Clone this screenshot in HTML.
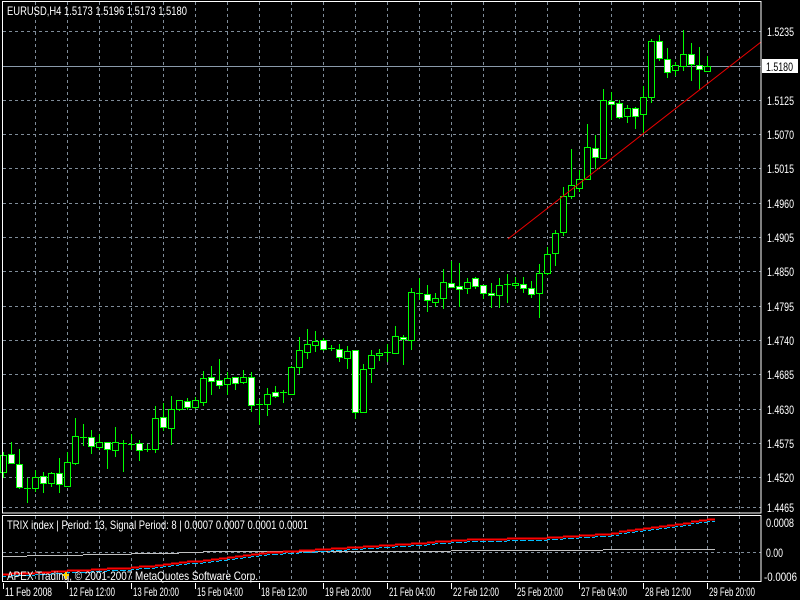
<!DOCTYPE html>
<html><head><meta charset="utf-8"><style>
html,body{margin:0;padding:0;background:#000;width:800px;height:600px;overflow:hidden}
svg{display:block}
text{font-family:"Liberation Sans",sans-serif;font-size:12px;fill:#fff}
</style></head><body>
<svg id="s" width="800" height="600" xmlns="http://www.w3.org/2000/svg">
<g id="grid" stroke="#7f8c99" stroke-width="1" stroke-dasharray="3,3" fill="none"></g>
<line x1="3" y1="66.5" x2="761" y2="66.5" stroke="#8a9aaa"/>
<g id="cand"></g>
<line x1="508" y1="239" x2="761" y2="42" stroke="#ee0000"/>
<g id="ind" fill="none"></g>
<g fill="none" stroke="#fff" stroke-width="1">
<rect x="2.5" y="1.5" width="758.5" height="511.5"/>
<rect x="2.5" y="515.5" width="758.5" height="66"/>
</g>
<text x="7" y="15" textLength="180" lengthAdjust="spacingAndGlyphs">EURUSD,H4  1.5173 1.5196 1.5173 1.5180</text>
<text x="7" y="529" textLength="301" lengthAdjust="spacingAndGlyphs">TRIX index | Period: 13, Signal Period: 8 |  0.0007 0.0007 0.0001 0.0001</text>
<text x="7" y="580" textLength="251" lengthAdjust="spacingAndGlyphs">APEX Trading, © 2001-2007 MetaQuotes Software Corp.</text>
<path d="M63 575 h6 M66 572 v7" stroke="#ffd700" stroke-width="2"/>
<g id="ax"></g>
<rect x="762" y="59" width="36" height="14" fill="#fff"/>
<text x="766" y="71" style="fill:#000" textLength="27" lengthAdjust="spacingAndGlyphs">1.5180</text>
<text x="766" y="527" textLength="28" lengthAdjust="spacingAndGlyphs">0.0008</text>
<text x="766" y="557" textLength="17" lengthAdjust="spacingAndGlyphs">0.00</text>
<text x="764" y="581" textLength="33" lengthAdjust="spacingAndGlyphs">-0.0006</text>
<g id="tx"></g>
</svg>
<script>
var NS="http://www.w3.org/2000/svg";
function el(p,t,a,txt){var e=document.createElementNS(NS,t);for(var k in a)e.setAttribute(k,a[k]);if(txt!==undefined)e.textContent=txt;document.getElementById(p).appendChild(e);return e;}
for(var x=35;x<761;x+=32){el('grid','line',{x1:x+.5,y1:2,x2:x+.5,y2:513});el('grid','line',{x1:x+.5,y1:516,x2:x+.5,y2:582});}
var labs=["1.5235","1.5180","1.5125","1.5070","1.5015","1.4960","1.4905","1.4850","1.4795","1.4740","1.4685","1.4630","1.4575","1.4520"];
for(var k=0;k<14;k++){var y=Math.round(31+34.33*k);if(k!=1){el('grid','line',{x1:3,y1:y+.5,x2:761,y2:y+.5});el('ax','text',{x:767,y:y+5,textLength:27,lengthAdjust:'spacingAndGlyphs'},labs[k]);}}
el('grid','line',{x1:3,y1:507.5,x2:761,y2:507.5});
el('ax','text',{x:767,y:512,textLength:27,lengthAdjust:'spacingAndGlyphs'},"1.4465");
el('grid','line',{x1:3,y1:552.5,x2:761,y2:552.5});
var C=[[3,452,477,455,472,0],[11,442,463,454,463,1],[19,449,488,464,487,1],[27,478,502,488,488,0],[35,470,491,477,488,0],[43,472,492,476,483,1],[51,472,486,473,483,0],[59,458,492,473,484,1],[67,452,486,462,486,0],[75,418,464,436,463,0],[83,424,445,437,437,0],[91,430,453,437,446,1],[99,434,449,442,447,0],[107,442,468,442,449,1],[115,427,456,442,450,0],[123,440,471,443,443,0],[131,434,449,444,444,0],[139,440,460,443,450,1],[147,444,451,449,449,0],[155,406,452,418,449,0],[163,403,430,417,427,1],[171,396,444,409,428,0],[179,400,410,400,409,0],[187,398,409,401,407,1],[195,397,408,400,407,0],[203,371,405,378,402,0],[211,366,394,377,381,1],[219,359,388,380,385,1],[227,372,394,378,384,0],[235,377,389,377,383,1],[243,370,383,377,382,0],[251,372,411,377,405,1],[259,399,424,404,404,0],[267,388,415,394,404,0],[275,386,397,392,396,1],[283,390,402,392,392,0],[291,366,394,367,394,0],[299,337,373,350,367,0],[307,329,358,344,352,0],[315,331,351,341,345,0],[323,338,350,340,349,1],[331,345,350,348,348,0],[339,344,361,349,357,1],[347,346,368,351,358,0],[355,350,418,350,412,1],[363,364,412,369,412,0],[371,350,382,355,368,0],[379,349,360,353,355,0],[387,344,361,352,352,0],[395,326,353,336,353,0],[403,335,364,337,339,1],[411,288,349,292,340,0],[419,278,299,293,293,0],[427,285,311,294,300,1],[435,293,306,298,302,0],[443,269,308,282,298,0],[451,261,287,283,287,1],[459,263,306,286,289,1],[467,278,293,282,288,0],[475,277,288,278,286,1],[483,285,298,285,293,1],[491,283,307,293,295,1],[499,278,307,285,295,0],[507,274,302,284,284,0],[515,277,288,283,285,0],[523,277,292,284,288,1],[531,281,297,288,294,1],[539,264,317,273,293,0],[547,247,274,254,273,0],[555,230,265,233,253,0],[563,187,235,196,232,0],[571,149,198,185,196,0],[579,170,191,179,188,0],[587,124,179,147,179,0],[595,135,168,148,157,1],[603,89,158,100,158,0],[611,92,119,101,104,1],[619,100,118,103,117,1],[627,105,122,108,116,0],[635,107,128,108,116,1],[643,86,133,97,114,0],[651,39,102,41,97,0],[659,35,60,41,58,1],[667,48,77,59,72,1],[675,62,75,65,70,0],[683,30,70,54,66,0],[691,43,80,54,64,1],[699,47,89,65,69,1],[707,56,71,66,71,0]];
C.forEach(function(c){
 el('cand','line',{x1:c[0]+.5,y1:c[1],x2:c[0]+.5,y2:c[2]+1,stroke:'#00ff00'});
 if(c[4]-c[3]<2){el('cand','line',{x1:c[0]-3,y1:c[3]+.5,x2:c[0]+4,y2:c[3]+.5,stroke:'#00ff00'});}
 else el('cand','rect',{x:c[0]-3+.5,y:c[3]+.5,width:6,height:c[4]-c[3],fill:c[5]?'#fff':'#000',stroke:'#00ff00'});
});
var pts=[[0,574],[133,567],[200,560],[267,552],[333,548],[400,544],[467,539],[533,538],[600,534],[667,525],[707,519]];
function yAt(x){for(var i=0;i<pts.length-1;i++){if(x<=pts[i+1][0]){var a=pts[i],b=pts[i+1];return a[1]+(b[1]-a[1])*(x-a[0])/(b[0]-a[0]);}}return 519;}
var r="",bl="",g="";
for(var x=3;x<=707;x+=8){var y=Math.round(yAt(x));r+="M"+x+" "+(y+.5)+"h8";bl+="M"+x+" "+(y+2.5)+"h8";
 var gy=Math.round(x<200?556-(x/200)*4:(x<450?551:(x<600?550:549)));g+="M"+x+" "+(gy+.5)+"h8";}
el('ind','path',{d:g,stroke:'#c0c0c0'});
el('ind','path',{d:bl,stroke:'#00bfff','stroke-dasharray':'3,2'});
el('ind','path',{d:r,stroke:'#ff0000','stroke-width':2});
var T=["11 Feb 2008","12 Feb 12:00","13 Feb 20:00","15 Feb 04:00","18 Feb 12:00","19 Feb 20:00","21 Feb 04:00","22 Feb 12:00","25 Feb 20:00","27 Feb 04:00","28 Feb 12:00","29 Feb 20:00"];
T.forEach(function(t,i){var x=3+64*i;el('tx','line',{x1:x+.5,y1:583,x2:x+.5,y2:589,stroke:'#fff'});el('tx','text',{x:x+2,y:596,textLength:i==0?47:46,lengthAdjust:'spacingAndGlyphs'},t);});
</script>
</body></html>
